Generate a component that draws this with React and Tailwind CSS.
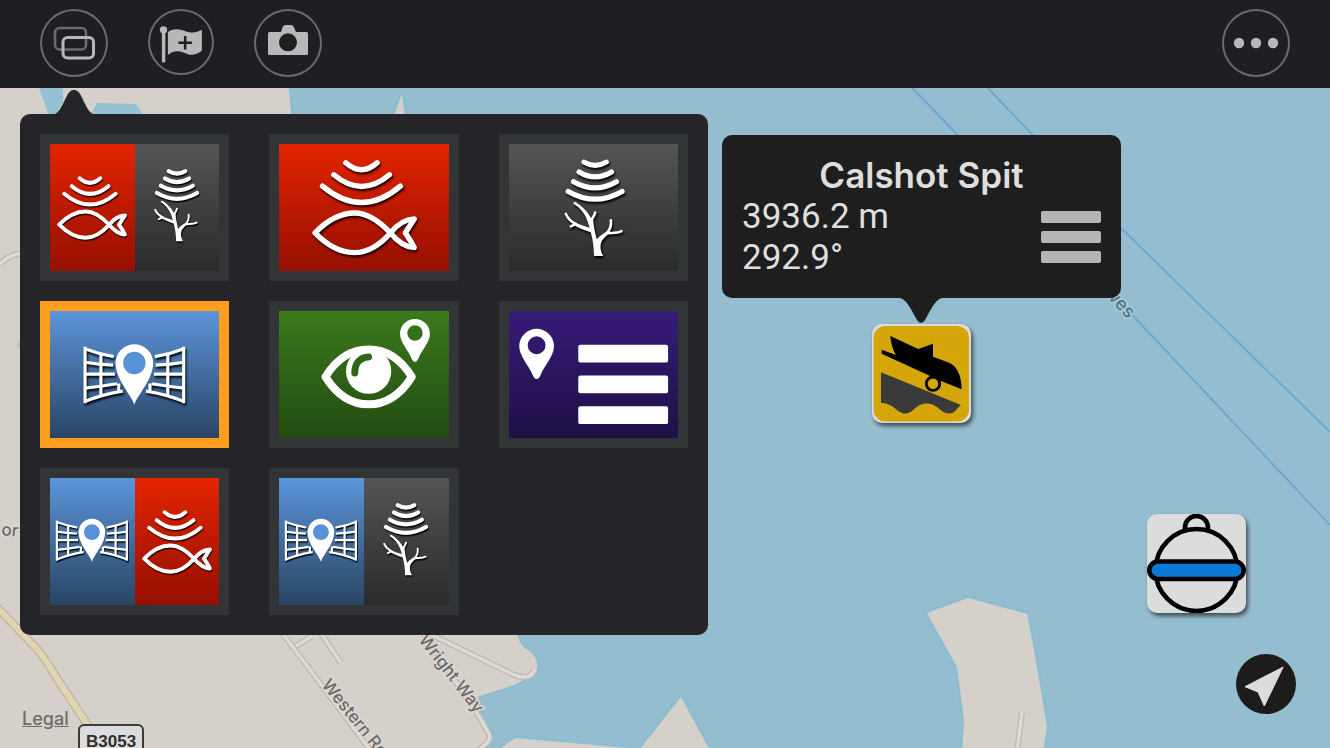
import React, { useState } from "react";

const PIN_PATH =
  "M0 33C-2 33 -3 31 -4 29C-8 19 -17.5 10 -17.5 0A17.5 17.5 0 0 1 17.5 0C17.5 10 8 19 4 29C3 31 2 33 0 33ZM0 -10A9 9 0 0 0 0 8A9 9 0 0 0 0 -10Z";

const GRADIENTS = {
  fish: "bg-linear-to-b from-[#e42300] to-[#961000]",
  tree: "bg-linear-to-b from-[#555555] to-[#2b2b2b]",
  chart: "bg-linear-to-b from-[#5b96db] to-[#2a4566]",
  eye: "bg-linear-to-b from-[#3b7a1c] to-[#234b12]",
  list: "bg-linear-to-b from-[#371b78] to-[#1e1046]",
};

const FishArt = ({ half }) => (
  <g
    className="drop-shadow-[1px_2px_1px_#1a0000]"
    fill="none"
    stroke="#fff"
    strokeWidth={half ? 6 : 5.4}
    strokeLinecap="round"
    strokeLinejoin="round"
  >
    <path d="M67 19Q83 33 98.6 19" />
    <path d="M55 31Q83 54.5 111 31" />
    <path d="M43.5 42.5Q83 75.5 122 42.5" />
    <path d="M36 89.5C50 75 64 69.5 76 69.5C90 69.5 102 79 112 89.7C118 97 126 104 136 104.5C133 98 130 94 127 89.7C130 85 133 80 136 75.5C126 76 118 82 112 89.7C102 101 90 109.5 76 109.5C64 109.5 50 104 36 89.5Z" />
  </g>
);

const TreeArt = ({ half }) => (
  <g
    className="drop-shadow-[1px_2px_1px_#000]"
    fill="none"
    stroke="#fff"
    strokeLinecap="round"
  >
    <g strokeWidth={half ? 5.6 : 5.2}>
      <path d="M75.3 18.3Q86.5 25 97.7 18.3" />
      <path d="M70.3 28.2Q86.5 38 103 28.2" />
      <path d="M64.7 38Q86.5 50.5 108 38" />
      <path d="M59.3 47.8Q86.5 63.5 113.7 47.8" />
    </g>
    <path
      d="M85.3 113C85.3 105 84.2 96 82 89C75 87 69 84.5 64 81L65.5 78.5C71 81.5 77 83 81 84.5L78.5 77C76 70 71 64 65.5 59.5C73 62 79 68 82 74L84.5 76C84.8 83 86.5 89 88 96C92 92 96 89.5 100 87.5C103 89 98 92 95 95.5C91.5 99 91.5 104 92.5 108C93 110 94 111.5 94.7 113Z"
      fill="#fff"
      stroke="none"
    />
    <g strokeWidth="2.6">
      <path d="M66 59.5C72 63 77 69 81 76M86.5 69C86 72 84.5 74 82.5 77" />
      <path d="M57 70.5C59 75 62 78 66 80M62 83L67 80.5" />
      <path d="M113 87.8C109 90 105 89.5 99 90M102.3 77C103 82 102 86 98 90" />
    </g>
  </g>
);

const ChartGrid = () => (
  <g fill="none" stroke="#fff" strokeWidth="3.2">
    <path d="M35 36V93" />
    <path d="M34.7 38Q49 43.5 64 46M34.7 51.7Q48 54 63.3 54.6M34.7 63.7H65M34.7 77.7Q51 76 67.3 73.3M34.7 91.3Q52 84 73 80.7" />
    <path d="M51 43V85M69 73V82" />
  </g>
);

const ChartArt = () => (
  <>
    <g className="drop-shadow-[1px_2px_1px_#000]">
      <ChartGrid />
      <g transform="translate(169.4 0) scale(-1 1)">
        <ChartGrid />
      </g>
    </g>
    <path
      d="M84.7 94.5C82 85 65.7 69 65.7 52.5A19 19 0 0 1 103.7 52.5C103.7 69 87.4 85 84.7 94.5Z"
      fill="#fff"
    />
    <circle cx="84.7" cy="52.4" r="11.3" fill="#5892d6" />
  </>
);

const EyeArt = () => (
  <>
    <path
      d="M46.5 66.3C58 48 73 38.7 90 38.7S122 48 133.5 66.3C122 84.6 107 94 90 94S58 84.6 46.5 66.3Z"
      fill="none"
      stroke="#fff"
      strokeWidth="8"
      strokeLinejoin="round"
    />
    <circle cx="90" cy="60.7" r="22.8" fill="#fff" />
    <path
      d="M76 62.5C76 53 81 46.6 90 46.3"
      fill="none"
      stroke="#2f651a"
      strokeWidth="7"
      strokeLinecap="round"
    />
    <path
      d={PIN_PATH}
      transform="translate(136.7 23) scale(0.86)"
      fill="#fff"
      fillRule="evenodd"
    />
  </>
);

const ListArt = () => (
  <g fill="#fff">
    <path d={PIN_PATH} transform="translate(27.5 35.5)" fillRule="evenodd" />
    <rect x="69.5" y="34" width="90.5" height="18" rx="2" />
    <rect x="69.5" y="65" width="90.5" height="18" rx="2" />
    <rect x="69.5" y="96" width="90.5" height="18" rx="2" />
  </g>
);

const ART = {
  fish: FishArt,
  tree: TreeArt,
  chart: ChartArt,
  eye: EyeArt,
  list: ListArt,
};

// how the full artwork is shrunk when it fills only half of a tile
const HALF_TRANSFORM = {
  fish: "translate(-14.7 22) scale(0.662)",
  tree: "translate(-22.3 13.8) scale(0.745)",
  chart: "translate(-18 17.4) scale(0.709)",
};

const layouts = [
  { label: "Fish and structure", panes: ["fish", "tree"] },
  { label: "Fish", panes: ["fish"] },
  { label: "Structure", panes: ["tree"] },
  { label: "Chart", panes: ["chart"] },
  { label: "Waypoint view", panes: ["eye"] },
  { label: "Waypoint list", panes: ["list"] },
  { label: "Chart and fish", panes: ["chart", "fish"] },
  { label: "Chart and structure", panes: ["chart", "tree"] },
];

const LayoutTile = ({ layout, selected, onClick }) => {
  const half = layout.panes.length > 1;
  return (
    <button
      type="button"
      aria-label={layout.label}
      aria-pressed={selected}
      onClick={onClick}
      className={`flex h-[147px] border-10 ${
        selected ? "border-[#ff9d1e]" : "border-[#313536]"
      }`}
    >
      {layout.panes.map((pane) => {
        const Art = ART[pane];
        return (
          <span key={pane} className={`h-full flex-1 ${GRADIENTS[pane]}`}>
            <svg
              viewBox={half ? "0 0 85 128" : "0 0 170 128"}
              className="h-full w-full"
            >
              <g transform={half ? HALF_TRANSFORM[pane] : undefined}>
                <Art half={half} />
              </g>
            </svg>
          </span>
        );
      })}
    </button>
  );
};

const LayoutMenu = () => {
  const [active, setActive] = useState(3);
  return (
    <div className="absolute top-[26px] left-5 w-[688px] rounded-[10px] bg-[#252429] p-5">
      <svg
        viewBox="0 0 44 26"
        className="absolute bottom-full left-8 -mb-px h-[26px] w-11"
      >
        <path
          d="M0 26C9 25 12 10 17 3.5Q22 -2 27 3.5C32 10 35 25 44 26Z"
          fill="#252429"
        />
      </svg>
      <div className="grid grid-cols-3 gap-x-10 gap-y-5">
        {layouts.map((layout, i) => (
          <LayoutTile
            key={layout.label}
            layout={layout}
            selected={i === active}
            onClick={() => setActive(i)}
          />
        ))}
      </div>
    </div>
  );
};

const RoundButton = ({ label, size = "size-[68px]", children }) => (
  <button
    type="button"
    aria-label={label}
    className={`${size} rounded-full ring-2 ring-[#6b6a6f] ring-inset`}
  >
    <svg viewBox="-34 -34 68 68" className="h-full w-full">
      {children}
    </svg>
  </button>
);

const Toolbar = () => (
  <header className="flex h-[88px] items-start justify-between bg-[#1f1e23] px-10 pt-[9px]">
    <div className="flex gap-10">
      <RoundButton label="Layouts">
        <g fill="none">
          <rect x="-19" y="-15" width="31" height="21.5" rx="4.5" stroke="#6b6a6f" strokeWidth="2.6" />
          <rect x="-11" y="-5.5" width="30.5" height="20.5" rx="4.5" stroke="#b8b8b8" strokeWidth="3" />
        </g>
      </RoundButton>
      <RoundButton label="Add waypoint" size="size-[66px]">
        <g fill="#b8b8b8">
          <circle cx="-18" cy="-12.5" r="3.8" />
          <rect x="-19.7" y="-11" width="3.6" height="32" />
          <path d="M-13.5 -10C-8 -15 0 -13 6 -10.5C12 -9 17 -10 21.5 -12.5V9C17 12 13 14 8 13C2 11 -5 6 -13.5 13.5Z" />
        </g>
        <path d="M4.3 -6.3V7.7M-2.7 .7H11.3" stroke="#1f1e23" strokeWidth="2.6" />
      </RoundButton>
      <RoundButton label="Screenshot">
        <path
          d="M-18.5 -11H-7L-5.5 -15.5Q-4.8 -18 -2.5 -18H3Q5.3 -18 6 -15.5L8 -11H18.5Q20 -11 20 -9.5V10.5Q20 12 18.5 12H-18.5Q-20 12 -20 10.5V-9.5Q-20 -11 -18.5 -11Z"
          fill="#b8b8b8"
        />
        <circle cx="0" cy="-0.7" r="9" fill="#1f1e23" />
      </RoundButton>
    </div>
    <RoundButton label="More">
      <g fill="#b8b8b8">
        <circle cx="-17" cy="0" r="5.2" />
        <circle cx="0" cy="0" r="5.2" />
        <circle cx="17" cy="0" r="5.2" />
      </g>
    </RoundButton>
  </header>
);

const roads = [
  "M280 630L323 687L400 790",
  "M296 646L312 636",
  "M320 632L341 663",
  "M420 628L480 718L489 734Q491 740 486 744L466 760",
  "M430 634L512 674Q530 682 535 669",
  "M0 264Q8 255 22 253",
  "M1022 712L1017 752",
];

const MapLabel = ({ x, y, angle, children }) => (
  <text
    transform={`translate(${x} ${y}) rotate(${angle})`}
    className="fill-[#6c6a69] stroke-[#dcd7d2] stroke-3 font-['Inter',sans-serif] text-[17px] font-medium"
    paintOrder="stroke"
  >
    {children}
  </text>
);

const MapBackground = () => (
  <svg
    viewBox="0 88 1330 660"
    preserveAspectRatio="xMinYMin slice"
    className="absolute inset-0 h-full w-full bg-[#95bdd0]"
  >
    {/* land */}
    <g fill="#d6d0ca" stroke="#8cbdd2" strokeWidth="5" strokeLinejoin="round" paintOrder="stroke">
      <path d="M-9 80H288L291 114L300 400L518 636Q520 646 528 650Q541 660 536 671Q520 684 508 687L480 696Q472 700 478 708L490 732Q493 742 485 748L470 770H-9Z" />
      <path d="M393 118L402 94L405 118Z" />
      <path d="M490 756L515 738L560 742L640 749L681 697L713 756Z" />
      <path d="M927 613L968 598L1027 614L1034 650L1047 727L1042 756H962L964 720L957 667Z" />
    </g>
    {/* inlets */}
    <g fill="#93c0d2">
      <path d="M39 88H63V102L55 116H49Z" />
      <path d="M90 116L97 103L136 104L144 116Z" />
    </g>
    {/* ferry routes */}
    <g fill="none" stroke="#6aa9d0" strokeWidth="2">
      <path d="M912 88L1104 285L1330 525" />
      <path d="M988 88L1121 228L1330 432" />
    </g>
    <g fill="none" strokeLinejoin="round">
      {roads.map((d) => (
        <path key={d} d={d} stroke="#bdb8b2" strokeWidth="6" />
      ))}
      {roads.map((d) => (
        <path key={d} d={d} stroke="#dedad5" strokeWidth="3.5" />
      ))}
      <path d="M-6 604L38 650Q46 660 56 677L93 733L116 770" stroke="#c2b7a2" strokeWidth="9" />
      <path d="M-6 604L38 650Q46 660 56 677L93 733L116 770" stroke="#dfd5b2" strokeWidth="6" />
    </g>
    <circle cx="22" cy="345" r="5" fill="#c3beb9" />
    <MapLabel x="1" y="535" angle="6">
      or
    </MapLabel>
    <MapLabel x="321" y="685" angle="51">
      Western Road
    </MapLabel>
    <MapLabel x="418" y="640" angle="52">
      Wright Way
    </MapLabel>
    <text
      transform="translate(1087 277) rotate(46)"
      className="fill-[#4f7487] stroke-[#a9c9d8] stroke-3 font-['Inter',sans-serif] text-[18px] font-medium"
      paintOrder="stroke"
    >
      Cowes
    </text>
  </svg>
);

const Callout = () => (
  <section className="absolute top-[47px] left-[722px] w-[399px] rounded-[10px] bg-[#1e1e1e] p-5 text-[35px] leading-[41px] text-[#dedede]">
    <h2 className="text-center font-['Inter',sans-serif] font-semibold">
      Calshot Spit
    </h2>
    <div className="flex items-center justify-between">
      <div className="font-['Roboto',sans-serif]">
        <p>3936.2 m</p>
        <p>292.9°</p>
      </div>
      <button
        type="button"
        aria-label="Waypoint details"
        className="flex w-[60px] flex-col gap-2"
      >
        <span className="h-3 w-full rounded-xs bg-[#b5b5b5]" />
        <span className="h-3 w-full rounded-xs bg-[#b5b5b5]" />
        <span className="h-3 w-full rounded-xs bg-[#b5b5b5]" />
      </button>
    </div>
    <svg
      viewBox="0 0 50 27"
      className="absolute top-full left-[174px] -mt-px h-[27px] w-[50px]"
    >
      <path
        d="M0 0C11 1 14 11 21 23Q25 29 29 23C36 11 39 1 50 0Z"
        fill="#1e1e1e"
      />
    </svg>
  </section>
);

const SlipwayMarker = () => (
  <button
    type="button"
    aria-label="Slipway"
    className="absolute top-[236px] left-[872px] size-[99px] rounded-[10px] bg-[#dcdcdc] shadow-[2px_3px_4px_rgba(0,0,0,0.6)]"
  >
    <svg viewBox="0 0 99 99" className="h-full w-full">
      <rect x="1.5" y="2" width="95.5" height="95.5" rx="12" fill="#d4a609" />
      <path
        d="M9.7 25.7L23.7 31Q19 22 18.3 12L46.3 25L61 19.7V32.7L76 38.3Q89 43 89.7 65.3L69 57L9.7 29.7Z"
        fill="#000"
      />
      <path
        d="M9 48.3L89 81C85 83 84 89.5 77 89.5C68 89.5 66 79.5 55 79.5C43 79.5 42 89.5 33 89.5C25 89.5 22 79 9 79Z"
        fill="#3b3a3b"
      />
      <circle cx="61" cy="59.7" r="6.7" fill="#d4a609" stroke="#000" strokeWidth="2.8" />
    </svg>
  </button>
);

const BuoyMarker = () => (
  <button
    type="button"
    aria-label="Mooring buoy"
    className="absolute top-[426px] left-[1147px] size-[99px] rounded-[10px] bg-[#dcdcdc] shadow-[2px_3px_4px_rgba(0,0,0,0.6)]"
  >
    <svg viewBox="0 0 99 99" className="h-full w-full">
      <g fill="none" stroke="#000" strokeWidth="4.6">
        <path d="M38 17V13.5A11.5 11.5 0 0 1 61 13.5V17" />
        <circle cx="49.5" cy="56" r="41" />
        <rect x="2.3" y="47.5" width="94.4" height="17.5" rx="8.7" fill="#0a7ad6" />
      </g>
    </svg>
  </button>
);

const LocateButton = () => (
  <button
    type="button"
    aria-label="Center on my location"
    className="absolute right-[34px] bottom-[34px] size-[60px] rounded-full bg-[#1d1b1b]"
  >
    <svg viewBox="-30 -30 60 60" className="h-full w-full">
      <path
        d="M17.2 -17L-21 2.7L-8 8L-1.7 22Z"
        fill="#dcdcdc"
        stroke="#dcdcdc"
        strokeLinejoin="round"
      />
    </svg>
  </button>
);

const App = () => {
  return (
    <div className="flex min-h-screen flex-col bg-[#1f1e23]">
      <Toolbar />
      <main className="relative min-h-[600px] flex-1 overflow-hidden">
        <MapBackground />
        <div className="absolute top-[636px] left-[78px] rounded-md border-2 border-[#3a3a3a] bg-[#dcdcdc] px-1.5 font-['Liberation_Sans',sans-serif] text-[17px] leading-8 font-bold text-[#2e2e2e]">
          B3053
        </div>
        <a
          href="#legal"
          className="absolute bottom-[17px] left-[22px] font-['Inter',sans-serif] text-[18px] leading-6 font-medium text-[#6f6d6b] underline"
        >
          Legal
        </a>
        <SlipwayMarker />
        <BuoyMarker />
        <Callout />
        <LayoutMenu />
        <LocateButton />
      </main>
    </div>
  );
};

export default App;
